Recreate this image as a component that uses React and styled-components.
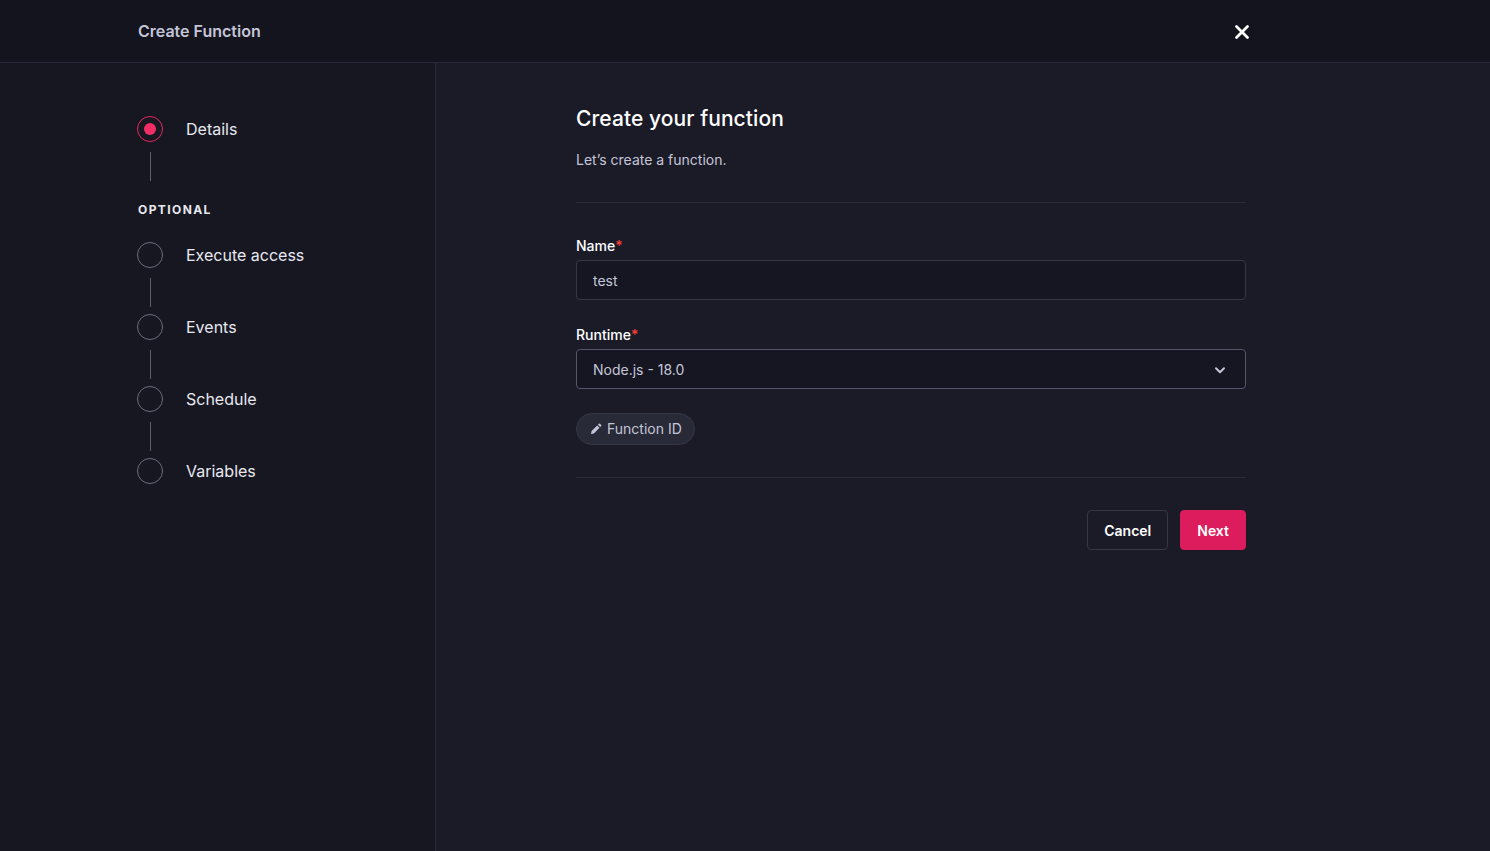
import React from "react";
import styled, { createGlobalStyle } from "styled-components";

const Global = createGlobalStyle`
  html, body { margin: 0; padding: 0; height: 100%; background: #1b1b28; }
  body { font-family: Inter, "Liberation Sans", sans-serif; overflow: hidden; }
  * { box-sizing: border-box; }
`;

const Page = styled.div`
  width: 100%;
  height: 851px;
  display: flex;
  flex-direction: column;
`;

const Header = styled.header`
  height: 63px;
  flex: none;
  background: #14141f;
  border-bottom: 1px solid #2a2a3a;
  display: flex;
  align-items: center;
  justify-content: space-between;
  padding: 0 240px 0 138px;
`;

const HeaderTitle = styled.h1`
  margin: 0;
  font-size: 16px;
  line-height: 22px;
  font-weight: 600;
  color: #c4c6d7;
`;

const CloseButton = styled.button`
  width: 16px;
  height: 16px;
  padding: 0;
  margin-top: 1px;
  border: 0;
  background: none;
  display: flex;
  color: #fff;
`;

const Body = styled.div`
  flex: 1;
  display: flex;
  min-height: 0;
`;

const Sidebar = styled.aside`
  width: 436px;
  flex: none;
  background: #171722;
  border-right: 1px solid #2a2a3a;
  padding: 53px 0 0 137px;
`;

const Step = styled.div`
  display: flex;
  align-items: center;
  gap: 23px;
  height: 26px;
`;

const Circle = styled.span`
  width: 26px;
  height: 26px;
  flex: none;
  border-radius: 50%;
  border: 1px solid ${p => (p.$active ? "#e5285f" : "#6c6d7d")};
  display: flex;
  align-items: center;
  justify-content: center;
`;

const Dot = styled.span`
  width: 12px;
  height: 12px;
  border-radius: 50%;
  background: #f02e65;
`;

const StepLabel = styled.span`
  font-size: 16px;
  line-height: 24px;
  color: #e8e9f0;
`;

const Connector = styled.div`
  width: 1px;
  height: 29px;
  margin: 10px 0 7px 13px;
  background: #5e5f70;
`;

const SectionLabel = styled.div`
  margin: 17px 0 20px 1px;
  height: 24px;
  font-size: 12px;
  line-height: 24px;
  font-weight: 700;
  letter-spacing: 1.4px;
  color: #e8e9f0;
`;

const Main = styled.main`
  flex: 1;
  padding: 41px 0 0 140px;
`;

const Form = styled.div`
  width: 670px;
`;

const Heading = styled.h2`
  margin: 1px 0 0;
  font-size: 21px;
  line-height: 28px;
  font-weight: 500;
  letter-spacing: 0.08px;
  color: #fff;
`;

const Lead = styled.p`
  margin: 16px 0 0;
  font-size: 14px;
  line-height: 22px;
  color: #c4c6d7;
`;

const Divider = styled.hr`
  margin: ${p => p.$m};
  border: 0;
  height: 1px;
  background: #2a2a3a;
`;

const Label = styled.label`
  display: block;
  height: 22px;
  margin-bottom: 3px;
  font-size: 14px;
  line-height: 22px;
  font-weight: 500;
  color: #fff;
`;

const Req = styled.span`
  color: #ff3b3b;
`;

const Field = styled.div`
  margin-bottom: ${p => p.$mb};
`;

const Control = styled.div`
  height: 40px;
  border-radius: 4px;
  background: #161622;
  border: 1px solid ${p => (p.$strong ? "#54556a" : "#363746")};
  padding: 1px 16px 0;
  display: flex;
  align-items: center;
  justify-content: space-between;
  font-size: 14px;
  line-height: 22px;
  color: #c4c6d7;
`;

const Chevron = styled.svg`
  width: 16px;
  height: 16px;
  margin-right: 1px;
  color: #c4c6d7;
`;

const Pill = styled.button`
  height: 32px;
  padding: 0 12px 2px 13px;
  border-radius: 16px;
  background: #282a38;
  border: 1px solid #363746;
  display: inline-flex;
  align-items: center;
  gap: 5px;
  font-family: inherit;
  font-size: 14px;
  color: #c4c6d7;
`;

const PillIcon = styled.svg`
  width: 12px;
  height: 12px;
  margin-top: 2px;
`;

const Actions = styled.div`
  display: flex;
  justify-content: flex-end;
  gap: 12px;
`;

const Button = styled.button`
  height: 40px;
  padding: 0 16px;
  border-radius: 4px;
  font-family: inherit;
  font-size: 14px;
  font-weight: 600;
  color: #fff;
  background: ${p => (p.$primary ? "#dc1c5c" : "transparent")};
  border: 1px solid ${p => (p.$primary ? "#dc1c5c" : "#363746")};
`;

const steps = ["Execute access", "Events", "Schedule", "Variables"];

export default function App() {
  return (
    <Page>
      <Global />
      <Header>
        <HeaderTitle>Create Function</HeaderTitle>
        <CloseButton aria-label="Close">
          <svg width="16" height="16" viewBox="0 0 16 16" fill="none">
            <path d="M2.5 2.5l11 11M13.5 2.5l-11 11" stroke="currentColor" strokeWidth="2.8" strokeLinecap="round" />
          </svg>
        </CloseButton>
      </Header>
      <Body>
        <Sidebar>
          <Step>
            <Circle $active><Dot /></Circle>
            <StepLabel>Details</StepLabel>
          </Step>
          <Connector />
          <SectionLabel>OPTIONAL</SectionLabel>
          {steps.map((s, i) => (
            <React.Fragment key={s}>
              <Step>
                <Circle />
                <StepLabel>{s}</StepLabel>
              </Step>
              {i < steps.length - 1 && <Connector />}
            </React.Fragment>
          ))}
        </Sidebar>
        <Main>
          <Form>
            <Heading>Create your function</Heading>
            <Lead>Let’s create a function.</Lead>
            <Divider $m="31px 0 32px" />
            <Field $mb="24px">
              <Label>Name<Req>*</Req></Label>
              <Control>test</Control>
            </Field>
            <Field $mb="24px">
              <Label>Runtime<Req>*</Req></Label>
              <Control $strong>
                Node.js - 18.0
                <Chevron viewBox="0 0 16 16" fill="none">
                  <path d="M4 6.2l4 4 4-4" stroke="currentColor" strokeWidth="2" strokeLinecap="round" strokeLinejoin="round" />
                </Chevron>
              </Control>
            </Field>
            <Pill>
              <PillIcon viewBox="0 0 12 12" fill="currentColor">
                <path d="M1 11l.6-2.9 5.6-5.6 2.3 2.3-5.6 5.6L1 11zM8 1.7l.9-.9a.8.8 0 0 1 1.1 0l1.2 1.2a.8.8 0 0 1 0 1.1l-.9.9L8 1.7z" />
              </PillIcon>
              Function ID
            </Pill>
            <Divider $m="32px 0 32px" />
            <Actions>
              <Button>Cancel</Button>
              <Button $primary>Next</Button>
            </Actions>
          </Form>
        </Main>
      </Body>
    </Page>
  );
}
